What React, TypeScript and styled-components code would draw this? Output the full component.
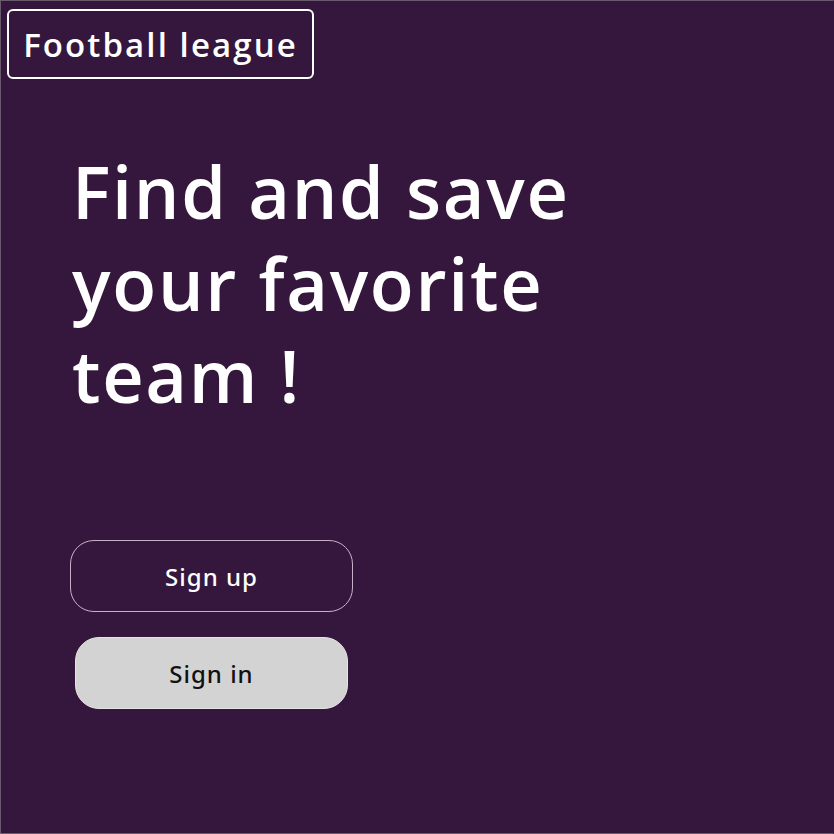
import styled, { createGlobalStyle } from "styled-components";

const GlobalStyle = createGlobalStyle`
  html, body {
    margin: 0;
    padding: 0;
    background: #35173d;
  }
  * {
    box-sizing: border-box;
  }
`;

const Page = styled.div`
  width: 834px;
  height: 834px;
  background: #35173d;
  border: 1px solid #6a5a6e;
  border-right-color: #35173d;
  padding: 8px 0 0 6px;
  display: flex;
  flex-direction: column;
`;

const Logo = styled.div`
  align-self: flex-start;
  border: 2px solid #ffffff;
  border-radius: 6px;
  width: 307px;
  height: 70px;
  display: flex;
  align-items: center;
  justify-content: center;
  color: #ffffff;
  font-family: "Open Sans", sans-serif;
  font-weight: 600;
  font-size: 33px;
  letter-spacing: 2.1px;
`;

const Hero = styled.section`
  padding: 66px 0 0 65px;
  display: flex;
  flex-direction: column;
`;

const Headline = styled.h1`
  margin: 0;
  width: 560px;
  color: #ffffff;
  font-family: "Open Sans", sans-serif;
  font-weight: 600;
  font-size: 72px;
  line-height: 92px;
  letter-spacing: 1.7px;
`;

const Actions = styled.div`
  margin-top: 119px;
  display: flex;
  flex-direction: column;
  align-items: flex-start;
  gap: 25px;
`;

const Button = styled.button<{ $filled?: boolean }>`
  width: ${(p) => (p.$filled ? "273px" : "283px")};
  height: 72px;
  margin-left: ${(p) => (p.$filled ? "3px" : "-2px")};
  border-radius: 24px;
  border: ${(p) => (p.$filled ? "1px solid #e4e4e4" : "1px solid #c7b1c9")};
  background: ${(p) => (p.$filled ? "#d3d3d3" : "transparent")};
  color: ${(p) => (p.$filled ? "#111111" : "#ffffff")};
  font-family: "Noto Sans", sans-serif;
  font-weight: 500;
  font-size: 24px;
  letter-spacing: 1px;
  cursor: pointer;
`;

export default function App() {
  return (
    <>
      <GlobalStyle />
      <Page>
        <Logo>Football league</Logo>
        <Hero>
          <Headline>Find and save your favorite team !</Headline>
          <Actions>
            <Button>Sign up</Button>
            <Button $filled>Sign in</Button>
          </Actions>
        </Hero>
      </Page>
    </>
  );
}
